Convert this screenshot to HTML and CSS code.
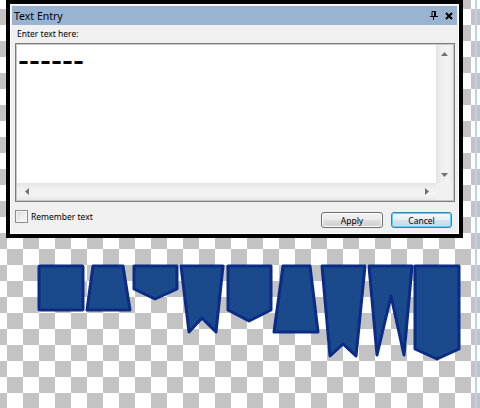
FILE: index.html
```html
<!DOCTYPE html>
<html lang="en">
<head>
    <meta charset="UTF-8">
    <title>Text Entry</title>
    <link rel="stylesheet" href="styles.css">
</head>
<body>
    <!-- Dialog -->
    <div class="frame">
        <div class="window">
            <div class="titlebar">
                <span class="title">Text Entry</span>
                <span class="tb-icons">
                    <svg width="8" height="9" viewBox="0 0 8 9">
                        <path d="M2 0.5h3.5v4.5M2 0.5v4.5" fill="none" stroke="#000" stroke-width="1"/>
                        <path d="M5 0v5" stroke="#000" stroke-width="2"/>
                        <path d="M0 5.5h8M3.5 5.5v3.5" stroke="#000" stroke-width="1"/>
                    </svg>
                    <svg width="8" height="8" viewBox="0 0 8 8">
                        <path d="M1 1l6 6M7 1l-6 6" stroke="#000" stroke-width="2"/>
                    </svg>
                </span>
            </div>

            <div class="body">
                <div class="label">Enter text here:</div>

                <!-- Text box with scrollbars -->
                <div class="textbox">
                    <div class="tb-inner">
                        <div class="tb-content"><span class="dashes">——————</span></div>
                        <div class="vscroll">
                            <svg width="7" height="4" viewBox="0 0 7 4"><path d="M0 4L3.5 0L7 4z" fill="#707070"/></svg>
                            <svg width="7" height="4" viewBox="0 0 7 4"><path d="M0 0L3.5 4L7 0z" fill="#707070"/></svg>
                        </div>
                        <div class="hscroll">
                            <svg width="4" height="7" viewBox="0 0 4 7"><path d="M4 0L0 3.5L4 7z" fill="#707070"/></svg>
                            <svg width="4" height="7" viewBox="0 0 4 7"><path d="M0 0L4 3.5L0 7z" fill="#707070"/></svg>
                        </div>
                        <div class="corner"></div>
                    </div>
                </div>

                <div class="footer">
                    <label class="check"><span class="box"></span>Remember text</label>
                    <div class="buttons">
                        <button class="btn">Apply</button>
                        <button class="btn default">Cancel</button>
                    </div>
                </div>
            </div>
        </div>
    </div>

    <!-- Banner shapes -->
    <svg class="flags" width="480" height="170" viewBox="0 238 480 170">
        <g fill="#1a4a8c" stroke="#0b2c86" stroke-width="3" stroke-linejoin="round">
            <rect x="39" y="266" width="44" height="44" rx="1"/>
            <path d="M93 266H123L130 310H87Z"/>
            <path d="M134 266H177V289L155 299L134 289Z"/>
            <path d="M181 266H223L216 332L202 318L189 332Z"/>
            <path d="M228 266H271V310L249 321L228 310Z"/>
            <path d="M283 266H310L318 332H274Z"/>
            <path d="M322 266H365L356 356L343 344L330 356Z"/>
            <path d="M369 266H412L404 355L391 296L377 355Z"/>
            <path d="M415 266H459V349L437 359L415 349Z"/>
        </g>
    </svg>

    <div class="edge"></div>
</body>
</html>
```

FILE: styles.css
```css
* {
    margin: 0;
    padding: 0;
    box-sizing: border-box;
}

html, body {
    width: 480px;
    height: 408px;
    overflow: hidden;
}

body {
    position: relative;
    background: repeating-conic-gradient(#c3c3c3 0 25%, #fff 0 50%) 7px 9px / 32px 32px;
    font-family: "Noto Sans", sans-serif;
    font-size: 8.5px;
    color: #000;
}

/* Dialog frame */
.frame {
    margin-left: 6px;
    width: 457px;
    height: 238px;
    border: 4px solid #000;
    background: #fff;
    padding: 1px;
}

.window {
    height: 100%;
    background: #f0f0f0;
    padding: 1px;
    display: flex;
    flex-direction: column;
}

.titlebar {
    height: 19px;
    background: #99b4d1;
    display: flex;
    align-items: center;
    justify-content: space-between;
    padding: 0 4px 0 2px;
}

.title {
    font-size: 10.5px;
}

.tb-icons {
    display: flex;
    align-items: center;
    gap: 7px;
}

.tb-icons svg {
    display: block;
}

/* Body */
.body {
    flex: 1;
    display: flex;
    flex-direction: column;
    padding: 3px 2px 0 3px;
}

.label {
    height: 12px;
    line-height: 12px;
    padding-left: 2px;
}

.textbox {
    margin-top: 3px;
    width: 440px;
    height: 159px;
    border: 1px solid #7d7d7d;
}

.tb-inner {
    height: 100%;
    border: 1px solid #c6c6c6;
    display: grid;
    grid-template-columns: 1fr 17px;
    grid-template-rows: 1fr 17px;
}

.tb-content {
    background: #fff;
    padding: 10px 0 0 2px;
}

.dashes {
    display: inline-block;
    font-family: "DejaVu Sans", sans-serif;
    font-weight: bold;
    font-size: 9px;
    letter-spacing: 2px;
    line-height: 10px;
    transform: scaleY(2.6);
}

.vscroll {
    background: linear-gradient(to right, #e3e3e3, #efefef 30%, #f3f3f3 70%, #e8e8e8);
    display: flex;
    flex-direction: column;
    justify-content: space-between;
    align-items: center;
    padding: 7px 0 6px;
}

.hscroll {
    background: linear-gradient(#e3e3e3, #efefef 30%, #f3f3f3 70%, #e8e8e8);
    display: flex;
    justify-content: space-between;
    align-items: center;
    padding: 0 7px 0 8px;
}

.corner {
    background: #f0f0f0;
}

/* Footer */
.footer {
    flex: 1;
    display: flex;
    justify-content: space-between;
    align-items: flex-start;
}

.check {
    margin-top: 8px;
    display: flex;
    align-items: center;
    gap: 3px;
    line-height: 13px;
}

.box {
    width: 13px;
    height: 13px;
    border: 1px solid #8e8f8f;
    background: linear-gradient(135deg, #dcdcdc, #fbfbfb);
    box-shadow: inset 0 0 0 1px #f4f4f4;
}

.buttons {
    margin-top: 10px;
    margin-right: 3px;
    display: flex;
    gap: 8px;
}

.btn {
    width: 62px;
    height: 16px;
    border: 1px solid #707070;
    border-radius: 3px;
    background: linear-gradient(#f2f2f2, #ebebeb 50%, #dddddd 50%, #cfcfcf);
    box-shadow: inset 0 0 0 1px #fcfcfc;
    font-family: "Noto Sans", sans-serif;
    font-size: 8.5px;
    line-height: 13px;
    color: #000;
}

.btn.default {
    width: 61px;
    border-color: #3c7fb1;
    box-shadow: inset 0 0 0 1px #5fd0f8;
    background: linear-gradient(#f4f8fb, #e6eef4 50%, #d5e3ee 50%, #c8d8e6);
}

/* Banner shapes */
.flags {
    display: block;
}

/* Selection edge on the right */
.edge {
    position: absolute;
    top: 0;
    right: 3px;
    width: 2px;
    height: 100%;
    background: #b9d3ef;
}
```
